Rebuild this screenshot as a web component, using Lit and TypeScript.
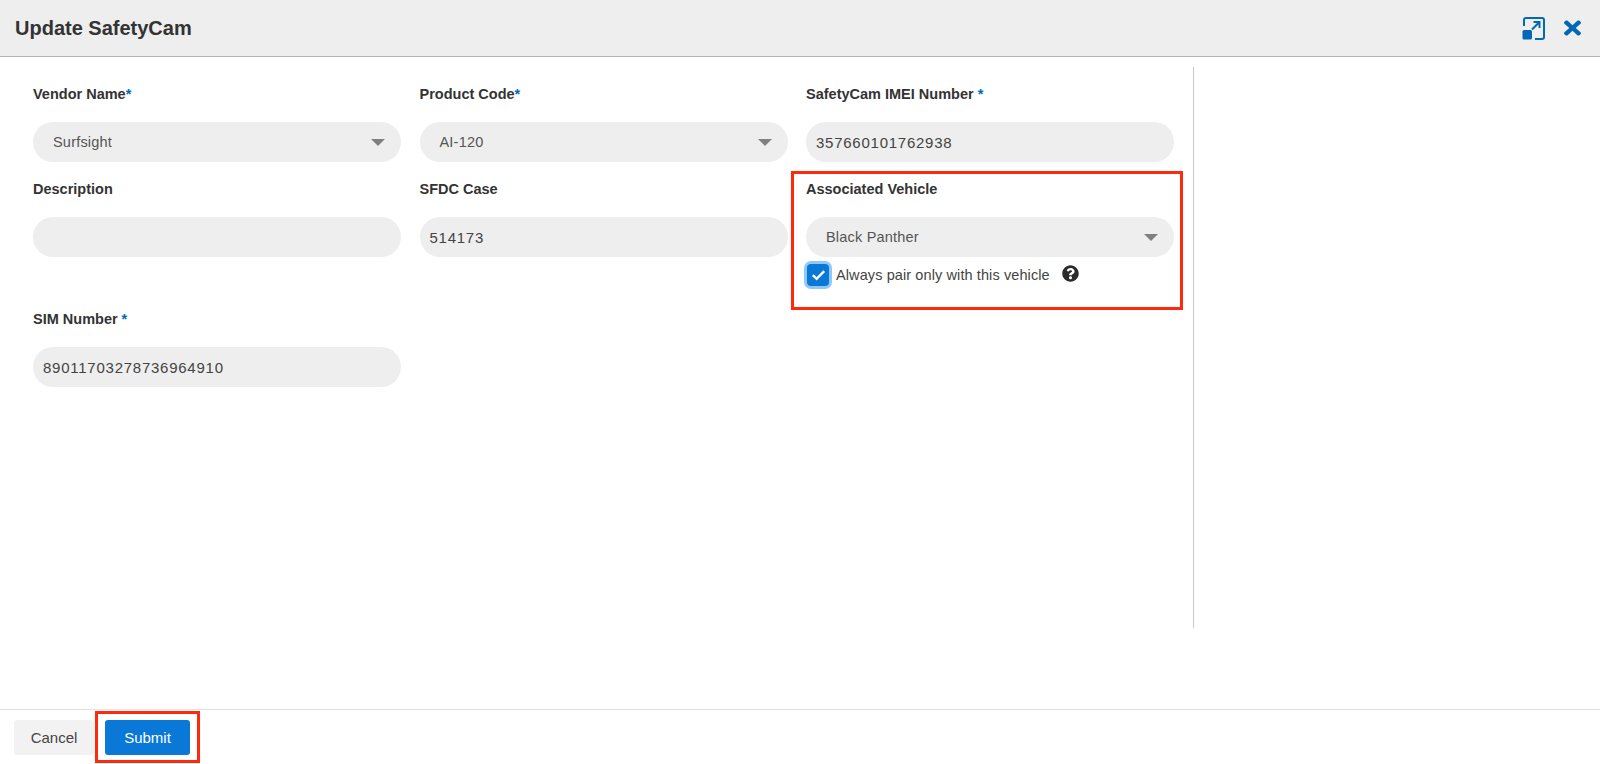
import { LitElement, html, css } from "lit";
import { customElement } from "lit/decorators.js";

type Field = {
  label: string;
  star?: string;
  value: string;
  select?: boolean;
  extra?: boolean;
};

const FIELDS: Field[] = [
  { label: "Vendor Name", star: "*", value: "Surfsight", select: true },
  { label: "Product Code", star: "*", value: "AI-120", select: true },
  { label: "SafetyCam IMEI Number", star: " *", value: "357660101762938" },
  { label: "Description", value: "" },
  { label: "SFDC Case", value: "514173" },
  { label: "Associated Vehicle", value: "Black Panther", select: true, extra: true },
  { label: "SIM Number", star: " *", value: "89011703278736964910" },
];

@customElement("app-root")
export class AppRoot extends LitElement {
  static styles = css`
    :host {
      display: flex;
      flex-direction: column;
      position: relative;
      height: 764px;
      overflow: hidden;
      background: #fff;
      color: #333;
      font-family: "Liberation Sans", Arial, sans-serif;
    }
    .header {
      display: flex;
      align-items: center;
      height: 56px;
      box-sizing: border-box;
      padding: 0 19px 0 15px;
      background: #eeeeee;
      border-bottom: 1px solid #b4b4b4;
      flex: none;
      height: 57px;
    }
    .title {
      flex: 1;
      font-size: 20px;
      font-weight: 700;
      color: #333;
      -webkit-text-stroke: 0;
    }
    .expand {
      width: 23px;
      height: 23px;
      margin-right: 19px;
      display: block;
    }
    .close {
      width: 17px;
      height: 22px;
      display: block;
    }
    .content {
      flex: 1;
      padding-top: 10px;
    }
    .panel {
      box-sizing: border-box;
      width: 1194px;
      height: 561px;
      padding: 17px 20px 0 33px;
      border-right: 1px solid #c8c8c8;
    }
    .grid {
      display: grid;
      grid-template-columns: repeat(3, 368px);
      column-gap: 18.5px;
      row-gap: 17px;
      align-items: start;
    }
    .label {
      height: 20px;
      line-height: 20px;
      margin-bottom: 18px;
      font-size: 14.5px;
      font-weight: 700;
      color: #333;
    }
    .star {
      color: #0068b4;
    }
    .input {
      display: flex;
      align-items: center;
      height: 40px;
      box-sizing: border-box;
      border-radius: 20px;
      background: #eeeeee;
      padding: 0 10px;
      font-size: 15px;
      letter-spacing: 0.75px;
      color: #444;
    }
    .input.select {
      padding: 0 16px 0 20px;
      font-size: 14.5px;
      letter-spacing: 0.2px;
      color: #555;
      justify-content: space-between;
    }
    .caret {
      width: 0;
      height: 0;
      border-left: 7.5px solid transparent;
      border-right: 7.5px solid transparent;
      border-top: 7px solid #808080;
    }
    .pair {
      display: flex;
      align-items: center;
      height: 35px;
      margin-top: 0;
      font-size: 14.5px;
      letter-spacing: 0.1px;
      color: #444;
    }
    .check {
      display: flex;
      align-items: center;
      justify-content: center;
      width: 22px;
      height: 22px;
      margin: 0 7px 0 1px;
      border-radius: 4px;
      background: #0a78d7;
      box-shadow: 0 0 0 3px #8fc9fb;
    }
    .check svg {
      width: 15px;
      height: 12px;
      display: block;
    }
    .help {
      width: 17px;
      height: 17px;
      margin: -3px 0 0 12px;
      display: block;
    }
    .footer {
      display: flex;
      align-items: center;
      gap: 11px;
      flex: none;
      height: 55px;
      box-sizing: border-box;
      padding: 1px 14px 0;
      border-top: 1px solid #e2e2e2;
    }
    .btn {
      height: 35px;
      box-sizing: border-box;
      border: 0;
      border-radius: 3px;
      font-family: inherit;
      font-size: 15px;
      padding: 0;
    }
    .cancel {
      width: 80px;
      background: #f2f2f2;
      color: #444;
    }
    .submit {
      width: 85px;
      background: #0a78d7;
      color: #fff;
    }
    .mark {
      position: absolute;
      box-sizing: border-box;
      border: 3px solid #ff2a0d;
      pointer-events: none;
    }
    .mark.vehicle {
      left: 791px;
      top: 171px;
      width: 392px;
      height: 139px;
    }
    .mark.action {
      left: 95px;
      top: 711px;
      width: 105px;
      height: 52px;
    }
  `;

  renderField(f: Field) {
    return html`
      <div>
        <div class="label">${f.label}${f.star ? html`<span class="star">${f.star}</span>` : ""}</div>
        <div class="input ${f.select ? "select" : ""}">
          <span>${f.value}</span>
          ${f.select ? html`<span class="caret"></span>` : ""}
        </div>
        ${f.extra
          ? html`
              <div class="pair">
                <span class="check">
                  <svg viewBox="0 0 15 12">
                    <path d="M1.8 6.2l3.8 3.6 7.6-7.6" fill="none" stroke="#fff" stroke-width="2.4" />
                  </svg>
                </span>
                <span>Always pair only with this vehicle</span>
                <svg class="help" viewBox="0 0 512 512">
                  <path
                    fill="#2b2b2b"
                    d="M504 256c0 136.997-111.043 248-248 248S8 392.997 8 256C8 119.083 119.043 8 256 8s248 111.083 248 248zM262.655 90c-54.497 0-89.255 22.957-116.549 63.758-3.536 5.286-2.353 12.415 2.715 16.258l34.699 26.31c5.205 3.947 12.621 3.008 16.665-2.122 17.864-22.658 30.113-35.797 57.303-35.797 20.429 0 45.698 13.148 45.698 32.958 0 14.976-12.363 22.667-32.534 33.976C247.128 238.528 216 254.941 216 296v4c0 6.627 5.373 12 12 12h56c6.627 0 12-5.373 12-12v-1.333c0-28.462 83.186-29.647 83.186-106.667 0-58.002-60.165-102-116.531-102zM256 338c-25.365 0-46 20.635-46 46 0 25.364 20.635 46 46 46s46-20.636 46-46c0-25.365-20.635-46-46-46z"
                  />
                </svg>
              </div>
            `
          : ""}
      </div>
    `;
  }

  render() {
    return html`
      <div class="header">
        <div class="title">Update SafetyCam</div>
        <svg class="expand" viewBox="0 0 23 23">
          <path d="M2 9V3a2 2 0 0 1 2-2h16a2 2 0 0 1 2 2v17a2 2 0 0 1-2 2h-7" fill="none" stroke="#0068b4" stroke-width="2" />
          <rect x="0.5" y="13" width="9.5" height="9.5" rx="1.5" fill="#0068b4" />
          <path d="M10 12.5l7-7M11.5 5h6v6" fill="none" stroke="#0068b4" stroke-width="2" />
        </svg>
        <svg class="close" viewBox="0 0 352 512" preserveAspectRatio="none">
          <path
            fill="#0068b4"
            d="M242.72 256l100.07-100.07c12.28-12.28 12.28-32.19 0-44.48l-22.24-22.24c-12.28-12.28-32.19-12.28-44.48 0L176 189.28 75.93 89.21c-12.28-12.28-32.19-12.28-44.48 0L9.21 111.45c-12.28 12.28-12.28 32.19 0 44.48L109.28 256 9.21 356.07c-12.28 12.28-12.28 32.19 0 44.48l22.24 22.24c12.28 12.28 32.2 12.28 44.48 0L176 322.72l100.07 100.07c12.28 12.28 32.2 12.28 44.48 0l22.24-22.24c12.28-12.28 12.28-32.19 0-44.48L242.72 256z"
          />
        </svg>
      </div>
      <div class="content">
        <div class="panel">
          <div class="grid">${FIELDS.map((f) => this.renderField(f))}</div>
        </div>
      </div>
      <div class="footer">
        <button class="btn cancel">Cancel</button>
        <button class="btn submit">Submit</button>
      </div>
      <div class="mark vehicle"></div>
      <div class="mark action"></div>
    `;
  }
}
